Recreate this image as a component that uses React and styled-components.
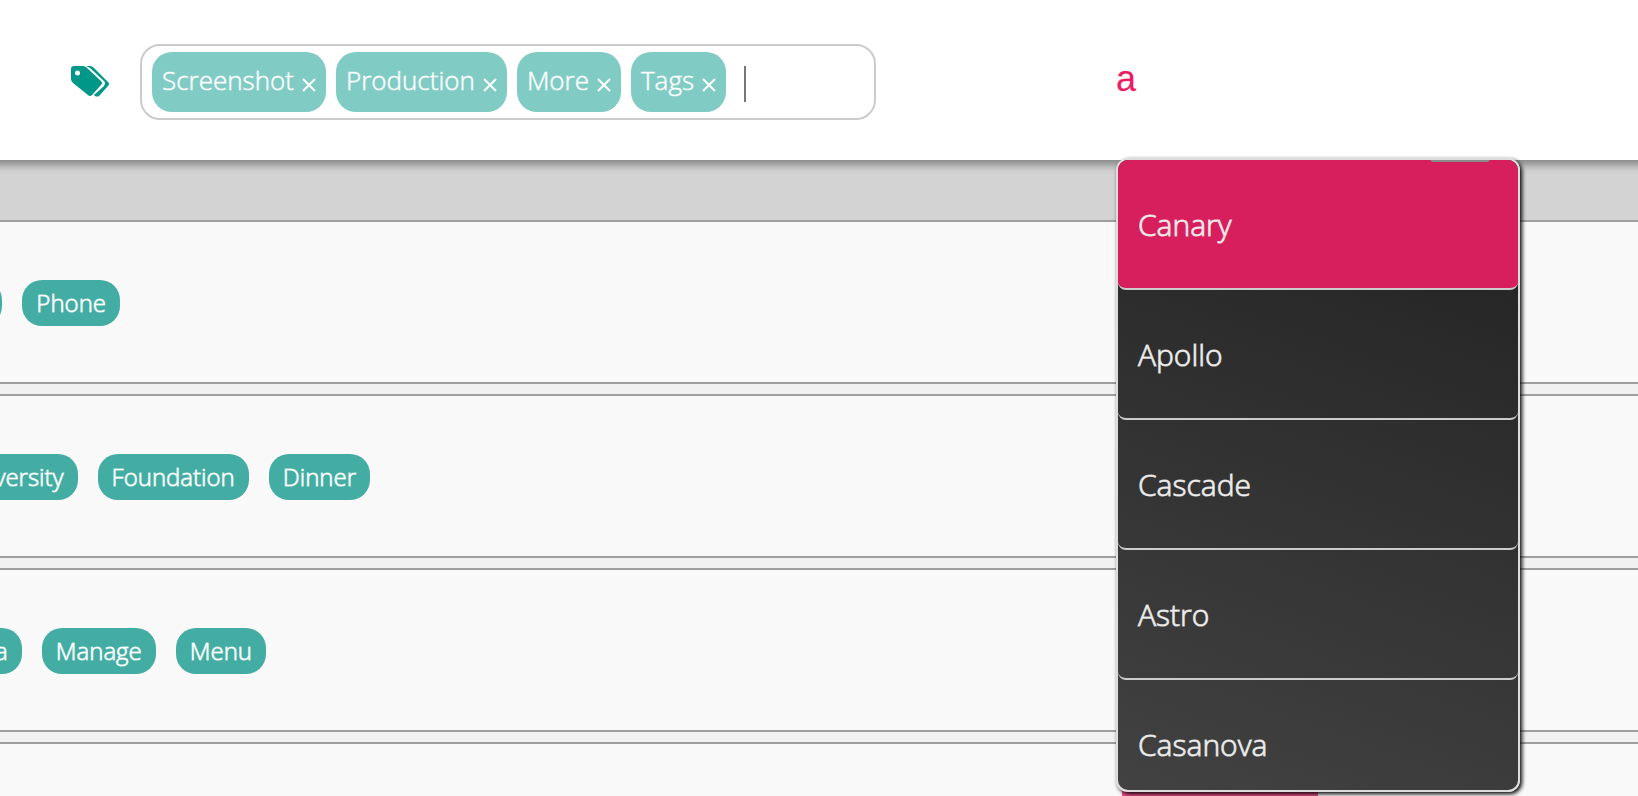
import React from "react";
import styled, { createGlobalStyle } from "styled-components";

const Global = createGlobalStyle`
  *, *::before, *::after { box-sizing: border-box; }
  html { overflow: hidden; }
  body {
    margin: 0;
    background: #f1f1f1;
    font-family: "Open Sans", "Noto Sans", sans-serif;
    font-weight: 300;
  }
  ul { list-style: none; margin: 0; padding: 0; }
`;

const Page = styled.div`
  height: 100vh;
  overflow: hidden;
`;

const Header = styled.header`
  position: relative;
  z-index: 1;
  display: grid;
  grid-template-columns: 1116px 1fr;
  height: 160px;
  background: #fff;
  box-shadow: 0 -10px 8px 15px #868686;
`;

const TagSearch = styled.div`
  display: flex;
  align-items: center;
  gap: 30px;
  padding: 4px 0 0 70px;
`;

const TagsIcon = styled.svg`
  width: 40px;
  height: 32px;
  fill: #009688;
`;

const TagBox = styled.div`
  display: flex;
  align-items: center;
  gap: 10px;
  width: 736px;
  height: 76px;
  padding: 0 10px;
  border: 2px solid #ccc;
  border-radius: 20px;
`;

const Chip = styled.span`
  display: flex;
  align-items: center;
  gap: 8px;
  height: 60px;
  padding: 0 10px;
  border-radius: 20px;
  background: #80cbc4;
  color: #fff;
  font-size: 26px;
  line-height: 56px;
  -webkit-text-stroke: 1px rgba(255, 255, 255, 0.5);
`;

const ChipLabel = styled.span`
  padding-bottom: 4px;
`;

const Remove = styled.button`
  display: flex;
  padding: 6px 0 0;
  border: 0;
  background: none;
  color: inherit;
`;

const TagInput = styled.input`
  flex: 1;
  min-width: 0;
  height: 36px;
  margin: 4px 0 0 8px;
  padding: 0;
  border: 0;
  border-left: 2px solid #777;
  outline: 0;
  background: none;
`;

const NamePicker = styled.div`
  position: relative;
  width: 404px;
`;

const NameInput = styled.input`
  width: 100%;
  height: 160px;
  padding: 0 0 2px;
  border: 0;
  outline: 0;
  background: none;
  color: #e91e63;
  font: 400 36px "Liberation Sans", Arial, sans-serif;
  -webkit-text-stroke: 1px rgba(233, 30, 99, 0.2);
`;

const Band = styled.div`
  height: 60px;
  background: #d3d3d3;
`;

const Rows = styled.main`
  display: grid;
  gap: 10px;
`;

const Row = styled.section`
  height: 164px;
  padding-top: ${(p) => (p.$bar ? 40 : 58)}px;
  border: solid #9e9e9e;
  border-width: 2px 0;
  background: #f9f9f9;
`;

const Bar = styled.div`
  width: 196px;
  height: 80px;
  margin-left: 1122px;
  background: #f0508a;
`;

const TagStrip = styled.ul`
  display: flex;
  justify-content: flex-end;
  gap: 20px;
  width: ${(p) => p.$end}px;
`;

const Tag = styled.li`
  flex: none;
  height: 46px;
  padding: 0 14px;
  border-radius: 20px;
  background: #43ada3;
  color: #fff;
  font-size: 24px;
  line-height: 46px;
  -webkit-text-stroke: 1px rgba(255, 255, 255, 0.7);
`;

const Menu = styled.div`
  position: absolute;
  top: 158px;
  left: 0;
  width: 404px;
  height: 634px;
  overflow: hidden;
  border: 2px solid #ddd;
  border-radius: 12px;
  background: linear-gradient(200deg, #212121, #424242);
  box-shadow: 2px 2px 4px #000;
`;

const Notch = styled.span`
  position: absolute;
  top: 0;
  right: 28px;
  width: 60px;
  height: 2px;
  background: #888;
  clip-path: polygon(0 0, 100% 0, 58px 100%, 2px 100%);
`;

const Option = styled.button`
  display: block;
  width: 100%;
  height: 130px;
  padding: 0 20px;
  border: 0;
  border-bottom: 2px solid #ccc;
  border-radius: 8px;
  background: ${(p) => (p.$active ? "#d61f5c" : "none")};
  color: #eee;
  font: inherit;
  font-size: 30px;
  text-align: left;
  -webkit-text-stroke: 1px rgba(238, 238, 238, 0.8);

  &:first-child {
    border-radius: 0 0 8px 8px;
  }
`;

const rows = [
  { end: 120, tags: ["Tablet", "Phone"] },
  { end: 370, tags: ["University", "Foundation", "Dinner"] },
  { end: 266, tags: ["Data", "Manage", "Menu"] },
];

export default function App() {
  return (
    <Page>
      <Global />
      <Header>
        <TagSearch>
          <TagsIcon viewBox="0 0 40 32" aria-hidden="true">
            <path
              fillRule="evenodd"
              d="M4 0h9q2 0 4 2l14 13q2 2 0 4L22 29q-2 2-4 0L3 17q-2-2-2-4V3q0-3 3-3zm1 7a2 2 0 1 0 5 0 2 2 0 1 0-5 0z"
            />
            <path d="M16 0h4q2 0 4 2l14 14q2 2 0 4L29 30q-2 1-4 0l-1-1 10-9q2-3 0-5L20 2q-2-1-4-2z" />
          </TagsIcon>
          <TagBox>
            {["Screenshot", "Production", "More", "Tags"].map((t) => (
              <Chip key={t}>
                <ChipLabel>{t}</ChipLabel>
                <Remove aria-label={`Remove ${t}`}>
                  <svg width="14" height="14" viewBox="0 0 14 14" stroke="currentColor" strokeWidth="2">
                    <path d="M1 1l12 12M13 1L1 13" />
                  </svg>
                </Remove>
              </Chip>
            ))}
            <TagInput aria-label="Add tag" />
          </TagBox>
        </TagSearch>
        <NamePicker>
          <NameInput aria-label="Name" defaultValue="a" />
          <Menu>
            {["Canary", "Apollo", "Cascade", "Astro", "Casanova"].map((n, i) => (
              <Option key={n} $active={i === 0}>
                {n}
              </Option>
            ))}
            <Notch />
          </Menu>
        </NamePicker>
      </Header>
      <Band />
      <Rows>
        {rows.map((r) => (
          <Row key={r.end}>
            <TagStrip $end={r.end}>
              {r.tags.map((t) => (
                <Tag key={t}>{t}</Tag>
              ))}
            </TagStrip>
          </Row>
        ))}
        <Row $bar>
          <Bar />
        </Row>
      </Rows>
    </Page>
  );
}
